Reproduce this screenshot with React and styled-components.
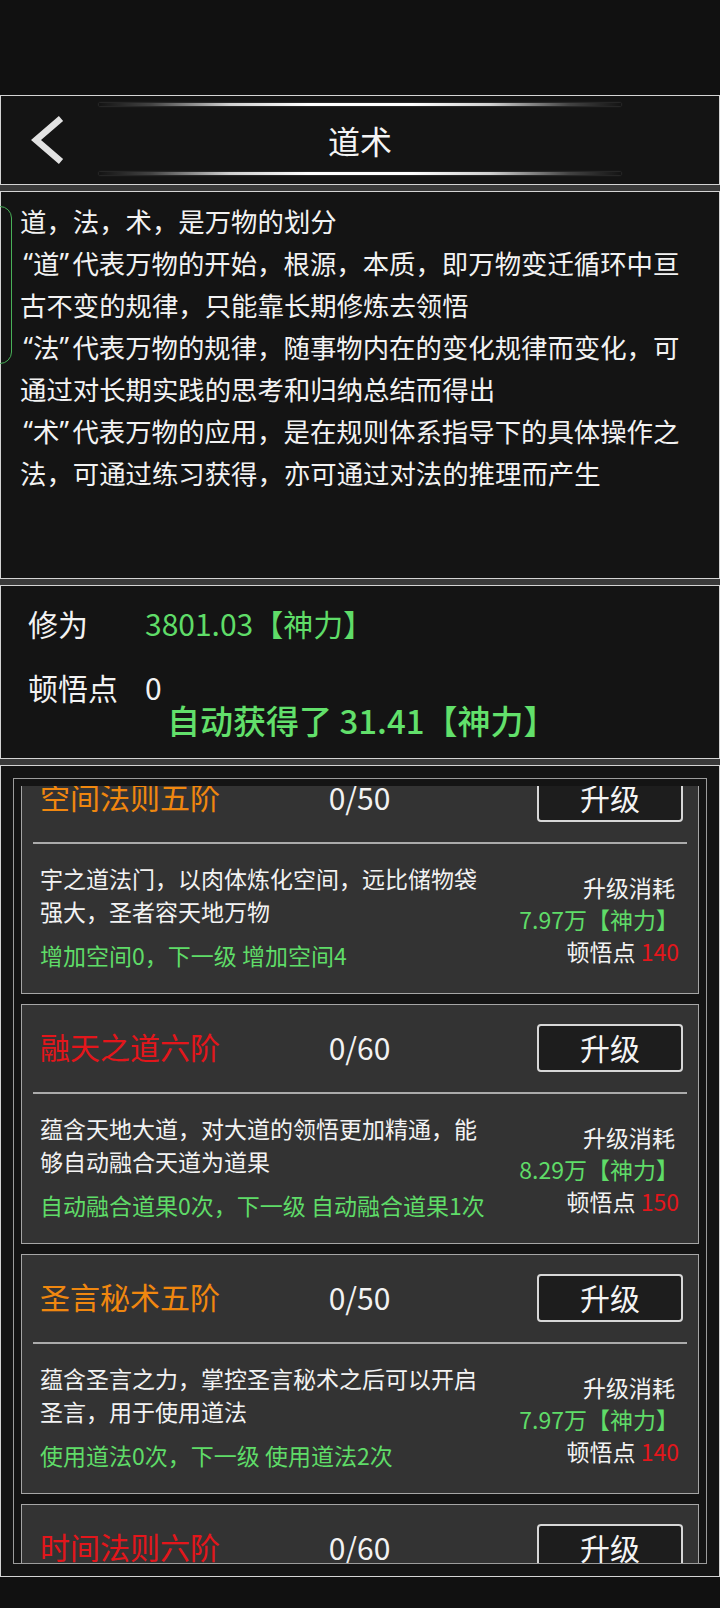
import React from "react";
import styled, { createGlobalStyle } from "styled-components";

const GlobalStyle = createGlobalStyle`
  html, body {
    margin: 0;
    padding: 0;
    background: #111111;
  }
  body {
    font-family: "Noto Sans CJK SC", "Noto Sans", sans-serif;
    color: #f2f2f2;
  }
  * { box-sizing: border-box; }
`;

const Page = styled.div`
  width: 720px;
  height: 1608px;
  padding-top: 95px;
  background: #111111;
  overflow: hidden;
`;

const Stack = styled.div`
  display: flex;
  flex-direction: column;
  gap: 6px;
  background: #3a3a3a;
`;

const Panel = styled.section`
  position: relative;
  height: ${(p) => p.$h}px;
  border: 1px solid #d4d4d4;
  background: #141414;
`;

const Header = styled(Panel)`
  display: flex;
  flex-direction: column;
  padding-top: 7px;
`;

const GlowLine = styled.div`
  width: 522px;
  height: 3px;
  margin: 0 auto;
  background: linear-gradient(
    90deg,
    rgba(255, 255, 255, 0) 0%,
    rgba(255, 255, 255, 0.2) 10%,
    rgba(255, 255, 255, 0.8) 25%,
    #ffffff 40%,
    #ffffff 60%,
    rgba(255, 255, 255, 0.8) 75%,
    rgba(255, 255, 255, 0.2) 90%,
    rgba(255, 255, 255, 0) 100%
  );
  box-shadow: 0 0 2px rgba(255, 255, 255, 0.3);
`;

const HeaderRow = styled.div`
  height: 66px;
  display: grid;
  grid-template-columns: 1fr auto 1fr;
  align-items: center;
`;

const BackButton = styled.button`
  justify-self: start;
  margin-left: 28px;
  margin-top: 2px;
  width: 40px;
  height: 56px;
  padding: 0;
  border: none;
  background: transparent;
  display: flex;
  align-items: center;
  justify-content: center;
`;

const Title = styled.h1`
  margin: 0;
  font-size: 32px;
  font-weight: 400;
  color: #f4f4f4;
  line-height: 1;
  margin-top: 1px;
`;

const DescPanel = styled(Panel)`
  padding: 8px 19px 0 19px;
`;

const SelectMark = styled.div`
  position: absolute;
  left: -20px;
  top: 14px;
  width: 31px;
  height: 158px;
  border: 1.5px solid #48b058;
  border-radius: 12px;
`;

const DescText = styled.p`
  margin: 0;
  font-size: 26.4px;
  line-height: 42px;
  color: #f2f2f2;
`;

const Quote = styled.span`
  font-family: "Noto Sans", "DejaVu Sans", sans-serif;
  display: inline-block;
  width: 13px;
  overflow: hidden;
  vertical-align: top;
  text-align: ${(p) => (p.$open ? "right" : "left")};
`;

const StatsPanel = styled(Panel)`
  padding: 15px 0 0 27px;
`;

const StatRow = styled.div`
  display: grid;
  grid-template-columns: 117px auto;
  height: 44px;
  align-items: center;
  font-size: 30px;
  line-height: 44px;
  & + & {
    margin-top: 20px;
  }
`;

const StatLabel = styled.span`
  color: #f2f2f2;
`;

const StatValue = styled.span`
  color: ${(p) => (p.$green ? "#5fdc68" : "#f2f2f2")};
`;

const Toast = styled.div`
  margin-top: -9px;
  margin-left: 139px;
  font-size: 33px;
  line-height: 40px;
  font-weight: 500;
  color: #62e06b;
  white-space: nowrap;
`;

const ListPanel = styled(Panel)`
  padding: 12px;
  display: flex;
  flex-direction: column;
`;

const Frame = styled.div`
  flex: 1;
  border: 1px solid #9c9c9c;
  padding-top: 7px;
  display: flex;
  flex-direction: column;
  min-height: 0;
`;

const Viewport = styled.div`
  flex: 1;
  overflow: hidden;
  padding: 0 7px;
  min-height: 0;
`;

const CardList = styled.div`
  display: flex;
  flex-direction: column;
  gap: 10px;
`;

const Card = styled.div`
  flex: none;
  height: 240px;
  border: 1px solid #a6a6a6;
  background: #333333;
`;

const CardHead = styled.div`
  display: grid;
  grid-template-columns: 1fr auto 1fr;
  align-items: center;
  padding: 19px 15px 0 18px;
`;

const CardTitle = styled.span`
  font-size: 30px;
  line-height: 40px;
  padding-bottom: 4px;
  color: ${(p) => (p.$tone === "red" ? "#e3161b" : "#f0870f")};
  white-space: nowrap;
`;

const Progress = styled.span`
  font-size: 30px;
  line-height: 40px;
  margin-right: 4px;
  padding-bottom: 2px;
  color: #f2f2f2;
`;

const UpgradeButton = styled.button`
  justify-self: end;
  width: 146px;
  height: 48px;
  border: 2px solid #d8d8d8;
  border-radius: 4px;
  background: #1d1d1d;
  color: #f4f4f4;
  font-family: inherit;
  font-size: 30px;
  line-height: 1;
  padding: 0 0 2px;
`;

const Divider = styled.div`
  height: 2px;
  margin: 20px 11px 0;
  background: #ababab;
`;

const CardBody = styled.div`
  display: flex;
  justify-content: space-between;
  padding: 18px 19px 0 18px;
`;

const InfoCol = styled.div`
  width: 452px;
  font-size: 23px;
`;

const InfoDesc = styled.p`
  margin: 0;
  line-height: 33px;
  color: #f2f2f2;
`;

const InfoEffect = styled.p`
  margin: 11px 0 0;
  line-height: 33px;
  color: #5fdc68;
  white-space: nowrap;
`;

const CostCol = styled.div`
  padding-top: 9px;
  font-size: 23px;
  line-height: 32px;
  text-align: right;
  color: #f2f2f2;
  white-space: nowrap;
`;

const CostLine = styled.div`
  color: ${(p) => (p.$green ? "#5fdc68" : "#f2f2f2")};
  margin-right: ${(p) => (p.$inset ? 4 : 0)}px;
`;

const Red = styled.span`
  color: #e3161b;
`;

const descLines = [
  { word: null, text: "道，法，术，是万物的划分" },
  { word: "道", text: "代表万物的开始，根源，本质，即万物变迁循环中亘古不变的规律，只能靠长期修炼去领悟" },
  { word: "法", text: "代表万物的规律，随事物内在的变化规律而变化，可通过对长期实践的思考和归纳总结而得出" },
  { word: "术", text: "代表万物的应用，是在规则体系指导下的具体操作之法，可通过练习获得，亦可通过对法的推理而产生" },
];

const cards = [
  {
    title: "空间法则五阶",
    tone: "orange",
    progress: "0/50",
    desc: "宇之道法门，以肉体炼化空间，远比储物袋强大，圣者容天地万物",
    effect: "增加空间0，下一级 增加空间4",
    cost: "7.97万【神力】",
    point: 140,
  },
  {
    title: "融天之道六阶",
    tone: "red",
    progress: "0/60",
    desc: "蕴含天地大道，对大道的领悟更加精通，能够自动融合天道为道果",
    effect: "自动融合道果0次，下一级 自动融合道果1次",
    cost: "8.29万【神力】",
    point: 150,
  },
  {
    title: "圣言秘术五阶",
    tone: "orange",
    progress: "0/50",
    desc: "蕴含圣言之力，掌控圣言秘术之后可以开启圣言，用于使用道法",
    effect: "使用道法0次，下一级 使用道法2次",
    cost: "7.97万【神力】",
    point: 140,
  },
  {
    title: "时间法则六阶",
    tone: "red",
    progress: "0/60",
    desc: "掌控时间之力，可令光阴流转，加快自身修炼的速度",
    effect: "修炼速度0%，下一级 修炼速度5%",
    cost: "8.29万【神力】",
    point: 150,
  },
];

function BackIcon() {
  return (
    <svg width="40" height="56" viewBox="0 0 40 56" fill="none">
      <polyline
        points="32,6.5 7,28 32,49.5"
        stroke="#e2e2e2"
        strokeWidth="6.5"
        strokeLinejoin="miter"
        strokeLinecap="butt"
      />
    </svg>
  );
}

function SkillCard({ item }) {
  return (
    <Card>
      <CardHead>
        <CardTitle $tone={item.tone}>{item.title}</CardTitle>
        <Progress>{item.progress}</Progress>
        <UpgradeButton>升级</UpgradeButton>
      </CardHead>
      <Divider />
      <CardBody>
        <InfoCol>
          <InfoDesc>{item.desc}</InfoDesc>
          <InfoEffect>{item.effect}</InfoEffect>
        </InfoCol>
        <CostCol>
          <CostLine $inset>升级消耗</CostLine>
          <CostLine $green>{item.cost}</CostLine>
          <CostLine>
            顿悟点 <Red>{item.point}</Red>
          </CostLine>
        </CostCol>
      </CardBody>
    </Card>
  );
}

export default function App() {
  return (
    <Page>
      <GlobalStyle />
      <Stack>
        <Header $h={90}>
          <GlowLine />
          <HeaderRow>
            <BackButton aria-label="返回">
              <BackIcon />
            </BackButton>
            <Title>道术</Title>
            <span />
          </HeaderRow>
          <GlowLine />
        </Header>

        <DescPanel $h={388}>
          <SelectMark />
          {descLines.map((l) => (
            <DescText key={l.text}>
              {l.word && (
                <>
                  <Quote $open>“</Quote>
                  {l.word}
                  <Quote>”</Quote>
                </>
              )}
              {l.text}
            </DescText>
          ))}
        </DescPanel>

        <StatsPanel $h={174}>
          <StatRow>
            <StatLabel>修为</StatLabel>
            <StatValue $green>3801.03【神力】</StatValue>
          </StatRow>
          <StatRow>
            <StatLabel>顿悟点</StatLabel>
            <StatValue>0</StatValue>
          </StatRow>
          <Toast>自动获得了 31.41【神力】</Toast>
        </StatsPanel>

        <ListPanel $h={812}>
          <Frame>
            <Viewport>
              <CardList style={{ marginTop: -32 }}>
                {cards.map((c) => (
                  <SkillCard key={c.title} item={c} />
                ))}
              </CardList>
            </Viewport>
          </Frame>
        </ListPanel>
      </Stack>
    </Page>
  );
}
